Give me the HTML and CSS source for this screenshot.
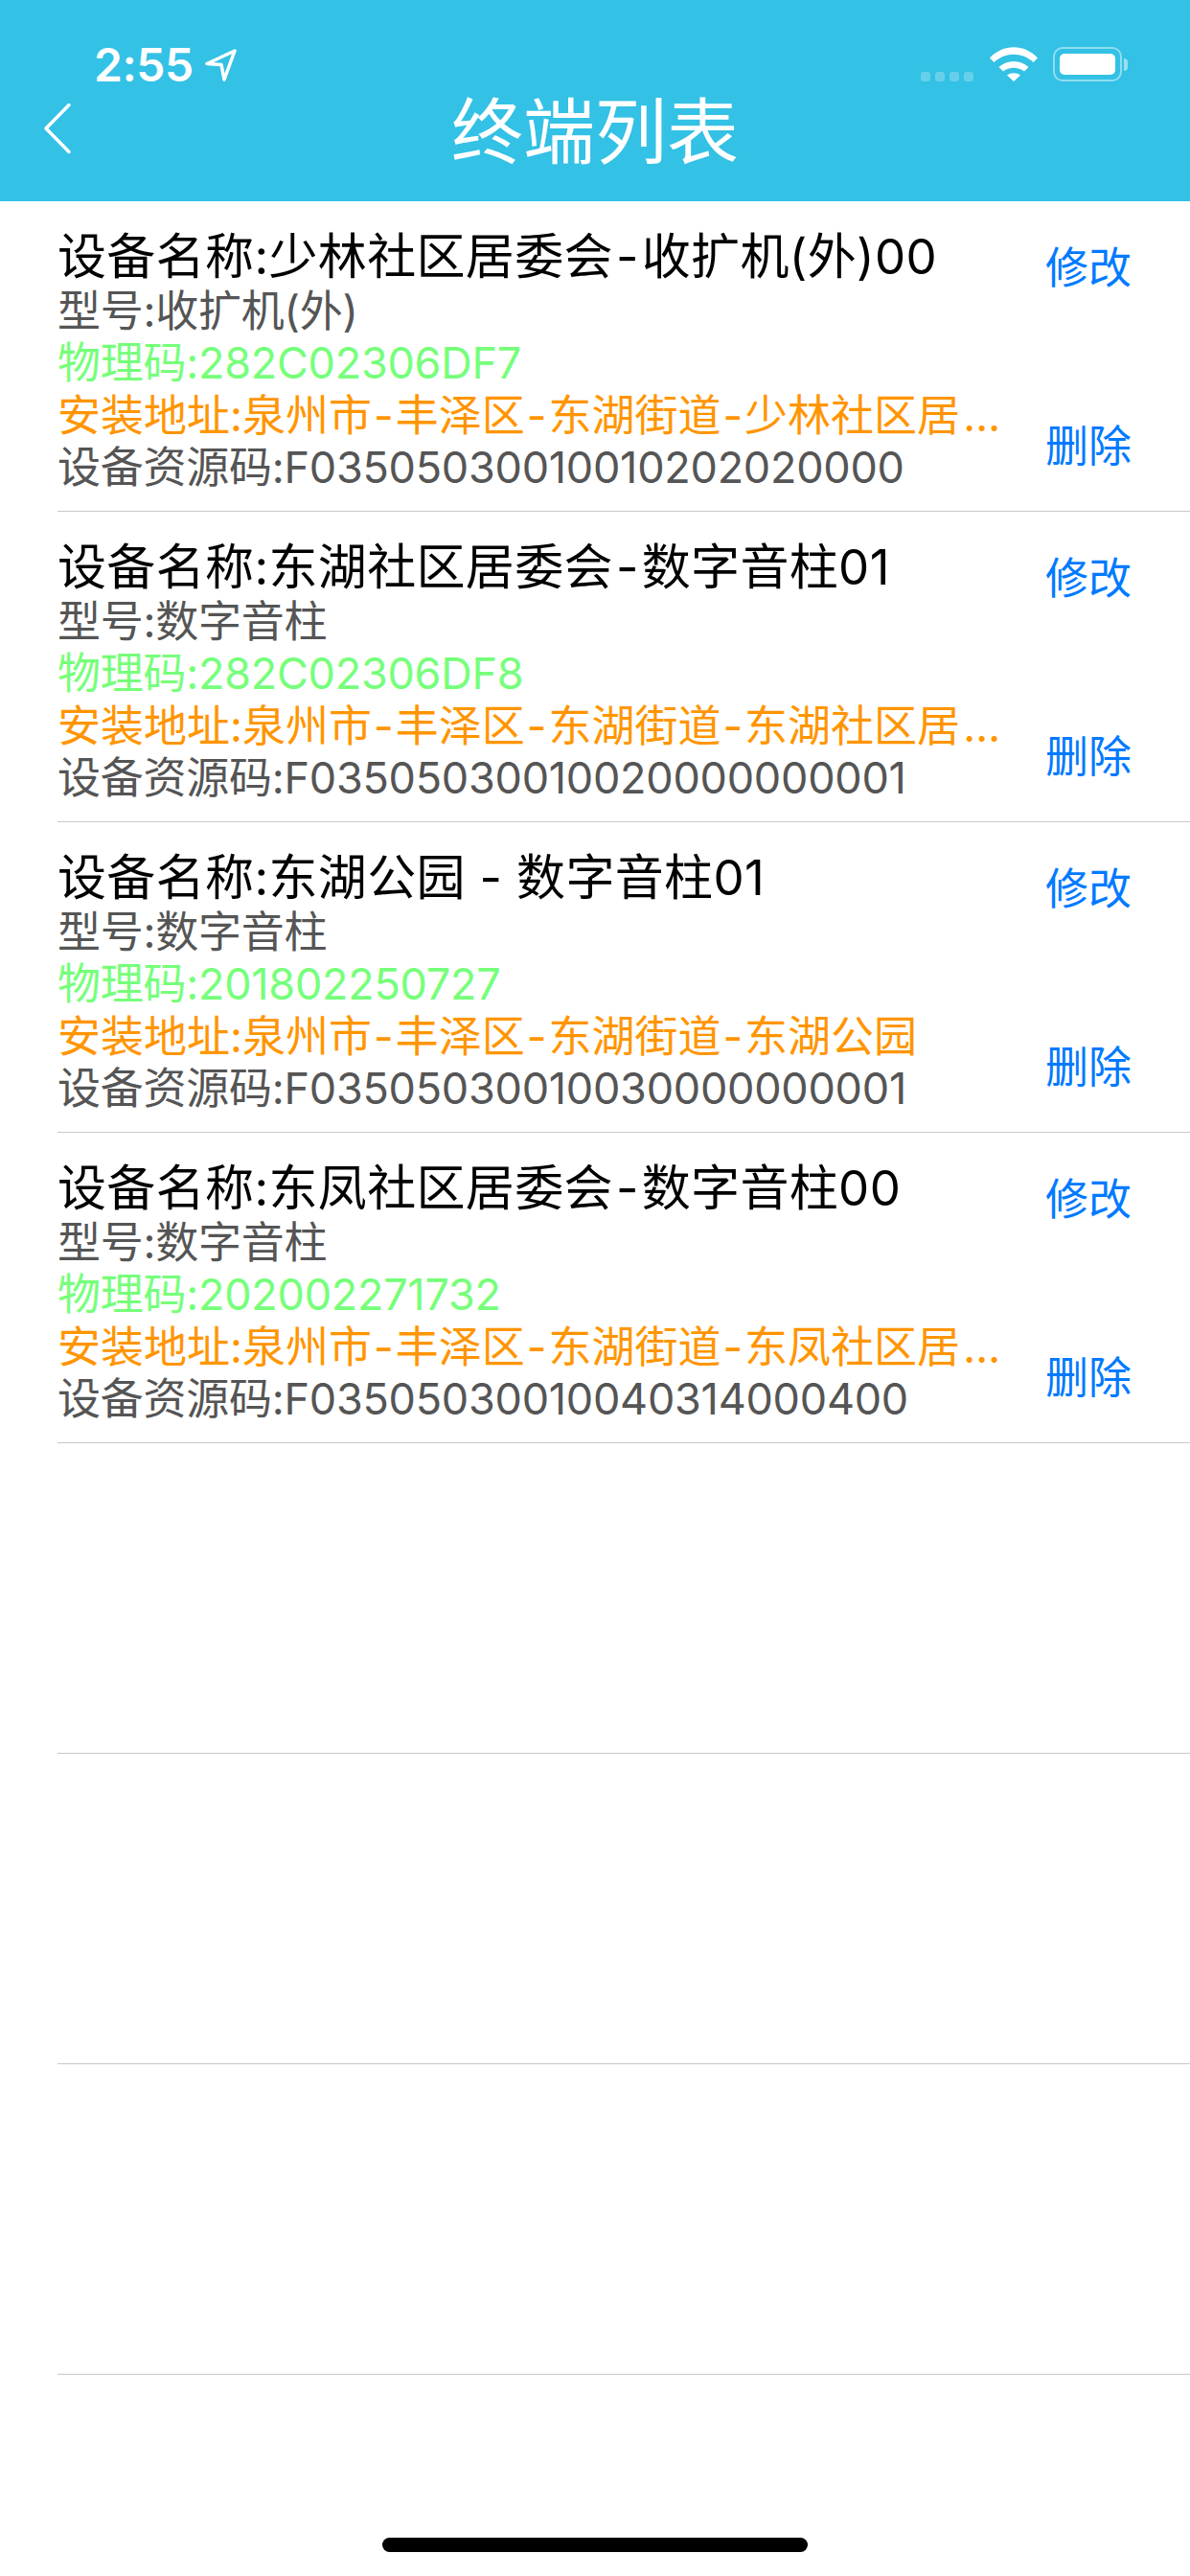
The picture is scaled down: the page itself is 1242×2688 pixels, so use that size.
FILE: index.html
```html
<!DOCTYPE html>
<html lang="zh-CN">
<head>
<meta charset="utf-8">
<title>终端列表</title>
<link rel="stylesheet" href="styles.css">
</head>
<body>
<div class="screen">
  <header class="header">
    <div class="status">
      <div class="status-left">
        <span class="time">2:55</span>
        <svg class="loc" width="33" height="34" viewBox="0 0 33 34"><path d="M2 15.500L31 2 20 32 17 16.500Z" fill="none" stroke="#fff" stroke-width="3.500" stroke-linejoin="round"/></svg>
      </div>
      <div class="status-right">
        <div class="dots"><i></i><i></i><i></i><i></i></div>
        <svg class="wifi" width="50" height="36" viewBox="0 0 50 36"><path d="M0 11.500C14-3.500 36-3.500 50 11.500L45.500 16C34 5 16 5 4.500 16Z" fill="#fff"/><path d="M9.500 21C18 13 32 13 40.500 21L36 25.500C29.500 20.500 20.500 20.500 14 25.500Z" fill="#fff"/><path d="M18 29.500C22 26.500 28 26.500 32 29.500L25 36Z" fill="#fff"/></svg>
        <div class="battery"><div class="battery-body"><div class="battery-fill"></div></div><div class="battery-cap"></div></div>
      </div>
    </div>
    <nav class="nav">
      <svg class="back" width="30" height="54" viewBox="0 0 30 54"><path d="M27 2.500L3 27 27 51.500" fill="none" stroke="#fff" stroke-width="3.500" stroke-linecap="round" stroke-linejoin="round"/></svg>
      <h1 class="title">终端列表</h1>
    </nav>
  </header>
  <main class="list">
    <div class="row">
      <div class="info">
        <div class="name">设备名称:少林社区居委会<span class="name-dash">-</span>收扩机(外)00</div>
        <div class="line model">型号:收扩机(外)</div>
        <div class="line code">物理码:282C02306DF7</div>
        <div class="line addr">安装地址:泉州市<span class="dash">-</span>丰泽区<span class="dash">-</span>东湖街道<span class="dash">-</span>少林社区居<span class="more">…</span></div>
        <div class="line model">设备资源码:F03505030010010202020000</div>
      </div>
      <div class="actions"><span>修改</span><span>删除</span></div>
    </div>
    <div class="row">
      <div class="info">
        <div class="name">设备名称:东湖社区居委会<span class="name-dash">-</span>数字音柱01</div>
        <div class="line model">型号:数字音柱</div>
        <div class="line code">物理码:282C02306DF8</div>
        <div class="line addr">安装地址:泉州市<span class="dash">-</span>丰泽区<span class="dash">-</span>东湖街道<span class="dash">-</span>东湖社区居<span class="more">…</span></div>
        <div class="line model">设备资源码:F03505030010020000000001</div>
      </div>
      <div class="actions"><span>修改</span><span>删除</span></div>
    </div>
    <div class="row">
      <div class="info">
        <div class="name">设备名称:东湖公园 - 数字音柱01</div>
        <div class="line model">型号:数字音柱</div>
        <div class="line code">物理码:201802250727</div>
        <div class="line addr">安装地址:泉州市<span class="dash">-</span>丰泽区<span class="dash">-</span>东湖街道<span class="dash">-</span>东湖公园</div>
        <div class="line model">设备资源码:F03505030010030000000001</div>
      </div>
      <div class="actions"><span>修改</span><span>删除</span></div>
    </div>
    <div class="row">
      <div class="info">
        <div class="name">设备名称:东凤社区居委会<span class="name-dash">-</span>数字音柱00</div>
        <div class="line model">型号:数字音柱</div>
        <div class="line code">物理码:202002271732</div>
        <div class="line addr">安装地址:泉州市<span class="dash">-</span>丰泽区<span class="dash">-</span>东湖街道<span class="dash">-</span>东凤社区居<span class="more">…</span></div>
        <div class="line model">设备资源码:F03505030010040314000400</div>
      </div>
      <div class="actions"><span>修改</span><span>删除</span></div>
    </div>
    <div class="row"></div>
    <div class="row"></div>
    <div class="row"></div>
  </main>
  <div class="home"></div>
</div>
</body>
</html>
```
FILE: styles.css
```css
* { box-sizing: border-box; margin: 0; padding: 0; }
html, body { width: 1242px; height: 2688px; background: #fff; overflow: hidden; }
body { font-family: Inter, "Noto Sans CJK SC", sans-serif; }
.screen { position: relative; width: 1242px; height: 2688px; display: flex; flex-direction: column; }
.header { height: 210px; background: #33c1e5; color: #fff; display: flex; flex-direction: column; flex: none; }
.status { height: 91px; padding: 46px 65px 0 98px; display: flex; justify-content: space-between; align-items: flex-start; }
.status-left { display: flex; align-items: flex-start; gap: 12px; }
.time { font-size: 48px; line-height: 44px; font-weight: 600; letter-spacing: -0.5px; }
.loc { margin-top: 5px; }
.status-right { display: flex; align-items: flex-start; }
.dots { display: flex; gap: 5px; margin-top: 29px; margin-right: 17px; }
.dots i { display: block; width: 10px; height: 10px; border-radius: 3px; background: rgba(255,255,255,.25); }
.wifi { margin-top: 3px; margin-right: 16px; }
.battery { display: flex; align-items: center; margin-top: 3px; }
.battery-body { width: 72px; height: 36px; padding: 5px; border: 2.500px solid rgba(255,255,255,.45); border-radius: 10px; }
.battery-fill { width: 100%; height: 100%; background: #fff; border-radius: 5px; }
.battery-cap { width: 4px; height: 13px; margin-left: 2px; background: rgba(255,255,255,.5); border-radius: 0 4px 4px 0; }
.nav { position: relative; flex: 1; display: flex; justify-content: center; align-items: flex-start; }
.back { position: absolute; left: 45px; top: 16px; }
.title { font-size: 75px; line-height: 90px; font-weight: 400; margin-top: 2px; }
.list { display: flex; flex-direction: column; }
.row { height: 324px; margin-left: 60px; display: flex; border-bottom: 1px solid #c8c8cc; }
.info { width: 996px; padding: 28px 0 0; flex: none; }
.name { font-size: 51px; line-height: 60px; color: #000; white-space: nowrap; letter-spacing: 0.35px; }
.name-dash { margin: 0 3px; }
.line { font-size: 45px; line-height: 54.300px; white-space: nowrap; letter-spacing: -0.25px; }
.model { color: #555; }
.code { color: #76ff7a; }
.addr { color: #ff9500; letter-spacing: 0; }
.dash { margin: 0 2px; }
.more { letter-spacing: 0; margin-left: 3px; }
.actions { flex: 1; padding: 42px 0 0 35px; display: flex; flex-direction: column; gap: 131px; font-size: 45px; line-height: 55px; color: #007aff; }
.home { position: absolute; left: 399px; top: 2648px; width: 444px; height: 15px; border-radius: 8px; background: #000; }
```
